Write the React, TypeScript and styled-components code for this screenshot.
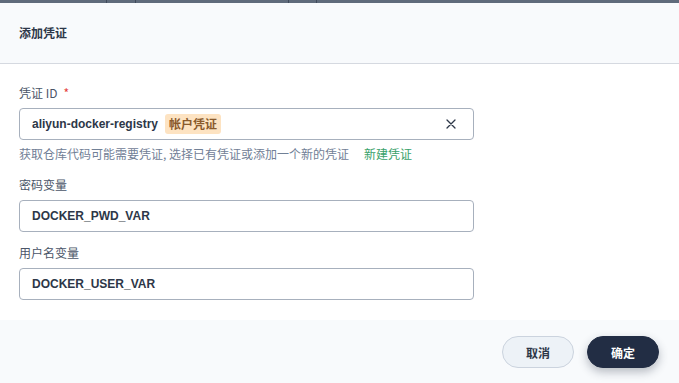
import React from "react";
import styled, { createGlobalStyle } from "styled-components";

const Global = createGlobalStyle`
  html, body { margin: 0; padding: 0; background: #5f6b7b; }
  body { font-family: "Liberation Sans", "Noto Sans CJK SC", Arial, sans-serif; }
  * { box-sizing: border-box; }
`;

const Page = styled.div`
  width: 679px;
  height: 383px;
  display: flex;
  flex-direction: column;
  overflow: hidden;
`;

const Backdrop = styled.div`
  height: 3px;
  flex: none;
  display: flex;
  background: #5f6b7b;
`;

const BackdropCell = styled.div<{ $w: number }>`
  width: ${(p) => p.$w}px;
  flex: none;
  border-right: 1px solid #3f4a5a;
`;

const Dialog = styled.div`
  flex: 1;
  display: flex;
  flex-direction: column;
  background: #ffffff;
  border-top-right-radius: 4px;
`;

const Header = styled.div`
  height: 61px;
  flex: none;
  display: flex;
  align-items: center;
  padding: 0 19px;
  background: #f8fafc;
  border-bottom: 1px solid #d5d9e0;
`;

const Title = styled.h2`
  margin: 0;
  font-family: "Noto Sans CJK SC", sans-serif;
  font-size: 12px;
  font-weight: 700;
  color: #2d3748;
  padding-bottom: 1px;
`;

const Body = styled.div`
  flex: none;
  height: 256px;
  padding: 20px 205px 0 19px;
  display: flex;
  flex-direction: column;
`;

const Label = styled.label`
  display: block;
  font-family: "Noto Sans CJK SC", sans-serif;
  font-size: 12px;
  line-height: 18px;
  color: #4a5568;
  margin-bottom: 6px;
`;

const Required = styled.span`
  color: #e53e3e;
  margin-left: 6px;
`;

const Field = styled.div<{ $mb: number }>`
  margin-bottom: ${(p) => p.$mb}px;
`;

const InputBox = styled.div`
  height: 32px;
  border: 1px solid #a7b0bd;
  border-radius: 4px;
  display: flex;
  align-items: center;
  padding: 0 12px 0 12px;
  gap: 7px;
  background: #fff;
`;

const Value = styled.span`
  font-family: "Liberation Sans", Arial, sans-serif;
  font-weight: 700;
  font-size: 12px;
  color: #2d3748;
`;

const Tag = styled.span`
  font-family: "Noto Sans CJK SC", sans-serif;
  font-weight: 700;
  font-size: 12px;
  line-height: 20px;
  padding: 0 4px;
  border-radius: 3px;
  background: #fde3c2;
  color: #8a5a2c;
`;

const Spacer = styled.div`
  flex: 1;
`;

const ClearBtn = styled.button`
  border: none;
  background: none;
  padding: 0;
  width: 16px;
  height: 16px;
  display: flex;
  align-items: center;
  justify-content: center;
  color: #2d3748;
  margin-right: 2px;
  cursor: pointer;
`;

const Help = styled.div`
  font-family: "Noto Sans CJK SC", sans-serif;
  font-size: 12px;
  line-height: 18px;
  color: #718096;
  margin-top: 5px;
`;

const Link = styled.a`
  color: #38a169;
  margin-left: 15px;
  text-decoration: none;
`;

const Footer = styled.div`
  flex: 1;
  background: #f8fafc;
  display: flex;
  justify-content: flex-end;
  align-items: flex-start;
  gap: 13px;
  padding: 16px 20px 0 0;
`;

const Button = styled.button<{ $primary?: boolean }>`
  width: 72px;
  height: 32px;
  border-radius: 16px;
  font-family: "Noto Sans CJK SC", sans-serif;
  font-weight: 700;
  font-size: 12px;
  cursor: pointer;
  border: 1px solid ${(p) => (p.$primary ? "#222d44" : "#cbd3de")};
  background: ${(p) => (p.$primary ? "#222d44" : "#edf2f7")};
  color: ${(p) => (p.$primary ? "#ffffff" : "#2d3748")};
  box-shadow: ${(p) => (p.$primary ? "0 4px 10px rgba(30,41,59,0.3)" : "none")};
`;

export default function App() {
  return (
    <>
      <Global />
      <Page>
        <Backdrop>
          <BackdropCell $w={107} />
          <BackdropCell $w={29} />
          <BackdropCell $w={153} />
          <BackdropCell $w={28} />
        </Backdrop>
        <Dialog>
          <Header>
            <Title>添加凭证</Title>
          </Header>
          <Body>
            <Field $mb={13}>
              <Label>
                凭证 ID<Required>*</Required>
              </Label>
              <InputBox>
                <Value>aliyun-docker-registry</Value>
                <Tag>帐户凭证</Tag>
                <Spacer />
                <ClearBtn aria-label="clear">
                  <svg width="10" height="10" viewBox="0 0 10 10">
                    <path d="M1 1 L9 9 M9 1 L1 9" stroke="#2d3748" strokeWidth="1.3" strokeLinecap="round" />
                  </svg>
                </ClearBtn>
              </InputBox>
              <Help>
                获取仓库代码可能需要凭证, 选择已有凭证或添加一个新的凭证
                <Link>新建凭证</Link>
              </Help>
            </Field>
            <Field $mb={12}>
              <Label>密码变量</Label>
              <InputBox>
                <Value>DOCKER_PWD_VAR</Value>
              </InputBox>
            </Field>
            <Field $mb={0}>
              <Label>用户名变量</Label>
              <InputBox>
                <Value>DOCKER_USER_VAR</Value>
              </InputBox>
            </Field>
          </Body>
          <Footer>
            <Button>取消</Button>
            <Button $primary>确定</Button>
          </Footer>
        </Dialog>
      </Page>
    </>
  );
}
